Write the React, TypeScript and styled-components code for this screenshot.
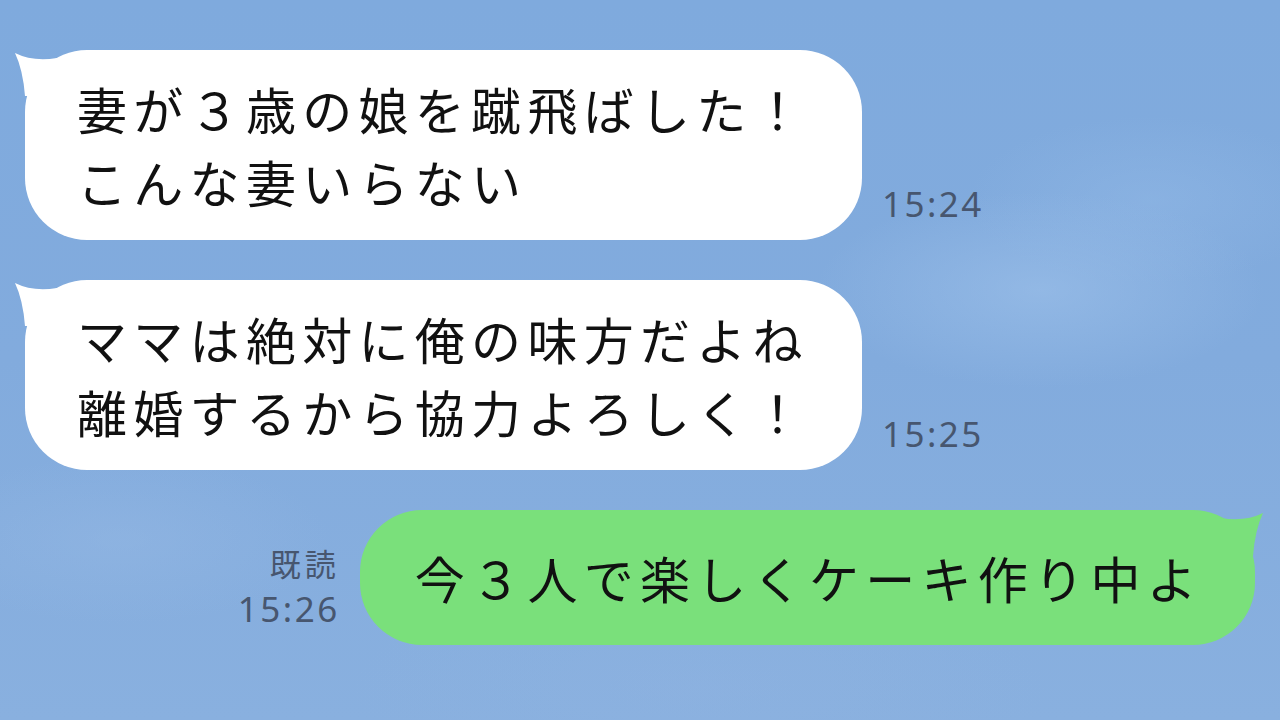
import React from "react";
import styled, { createGlobalStyle } from "styled-components";

const Global = createGlobalStyle`
  html, body { margin: 0; padding: 0; }
  body {
    width: 1280px;
    height: 720px;
    overflow: hidden;
    font-family: "Noto Sans CJK JP", "Noto Sans", sans-serif;
  }
`;

const Screen = styled.div`
  width: 1280px;
  height: 720px;
  box-sizing: border-box;
  padding: 50px 25px 0 25px;
  display: flex;
  flex-direction: column;
  gap: 40px;
  background:
    radial-gradient(ellipse 320px 140px at 1040px 290px, rgba(160, 195, 235, 0.55), transparent 70%),
    radial-gradient(ellipse 260px 120px at 1150px 200px, rgba(150, 188, 232, 0.4), transparent 70%),
    radial-gradient(ellipse 300px 120px at 120px 540px, rgba(150, 185, 228, 0.45), transparent 70%),
    radial-gradient(ellipse 500px 160px at 700px 690px, rgba(145, 180, 225, 0.35), transparent 70%),
    linear-gradient(180deg, #7faadd 0%, #82abdd 50%, #89b0df 100%);
`;

const Row = styled.div<{ $mine?: boolean }>`
  display: flex;
  align-items: flex-end;
  justify-content: ${(p) => (p.$mine ? "flex-end" : "flex-start")};
  gap: 20px;
`;

const Bubble = styled.div<{ $mine?: boolean }>`
  position: relative;
  box-sizing: border-box;
  background: ${(p) => (p.$mine ? "#7ae07b" : "#ffffff")};
  color: #111;
  border-radius: 62px;
  padding: ${(p) => (p.$mine ? "31px 52px 31px 55px" : "22px 53px 22px 52px")};
  font-size: 50px;
  line-height: 73px;
  letter-spacing: 6.3px;
  white-space: nowrap;
`;

const Tail = styled.svg<{ $mine?: boolean }>`
  position: absolute;
  top: 0;
  width: 50px;
  height: 50px;
  ${(p) => (p.$mine ? "right: -10px; transform: scaleX(-1);" : "left: -12px;")}
`;

const Meta = styled.div`
  display: flex;
  flex-direction: column;
  align-items: flex-end;
  color: #47566f;
  font-family: "Noto Sans", "Noto Sans CJK JP", sans-serif;
  font-size: 35px;
  line-height: 46px;
  letter-spacing: 2.5px;
  padding-bottom: 13px;
`;

const Read = styled.span`
  font-family: "Noto Sans CJK JP", sans-serif;
  font-size: 31px;
  letter-spacing: 4px;
`;

function BubbleTail({ mine, color }: { mine?: boolean; color: string }) {
  return (
    <Tail $mine={mine} viewBox="0 0 50 50">
      <path d="M2 3 Q20 12 44 8 L44 46 L12 46 Q10 20 2 3 Z" fill={color} />
    </Tail>
  );
}

const messages = [
  { lines: ["妻が３歳の娘を蹴飛ばした！", "こんな妻いらない"], time: "15:24" },
  { lines: ["ママは絶対に俺の味方だよね", "離婚するから協力よろしく！"], time: "15:25" },
];

export default function App() {
  return (
    <>
      <Global />
      <Screen>
        {messages.map((m) => (
          <Row key={m.time}>
            <Bubble>
              <BubbleTail color="#ffffff" />
              {m.lines.map((l) => (
                <div key={l}>{l}</div>
              ))}
            </Bubble>
            <Meta>{m.time}</Meta>
          </Row>
        ))}
        <Row $mine>
          <Meta>
            <Read>既読</Read>
            <span>15:26</span>
          </Meta>
          <Bubble $mine>
            <BubbleTail mine color="#7ae07b" />
            今３人で楽しくケーキ作り中よ
          </Bubble>
        </Row>
      </Screen>
    </>
  );
}
